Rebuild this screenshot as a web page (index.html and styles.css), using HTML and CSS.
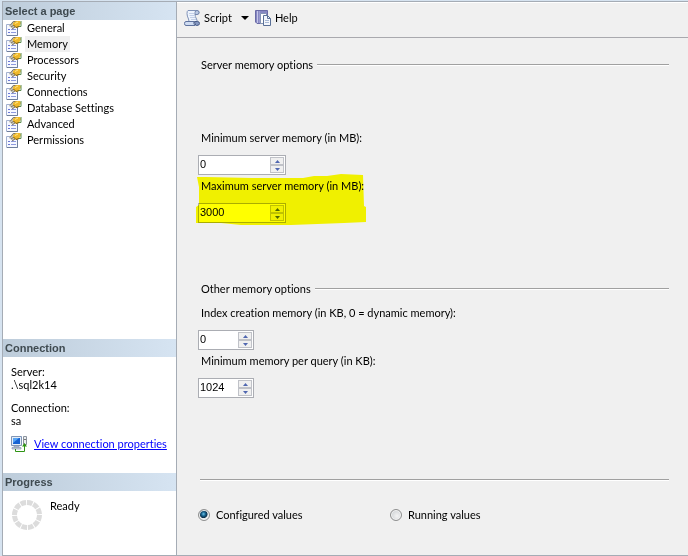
FILE: index.html
```
<!DOCTYPE html>
<html lang="en">
<head>
    <meta charset="UTF-8">
    <meta name="viewport" content="width=device-width, initial-scale=1.0">
    <title>Server Properties</title>
    <link rel="stylesheet" href="styles.css">
</head>
<body>
<!-- shared icons -->
<svg class="defs" aria-hidden="true">
    <symbol id="page-icon" viewBox="0 0 16 16">
        <path d="M.5 4.500h11v11H.5z" fill="#f6f8ff" stroke="#a3b1cf"/>
        <path d="M11.500 6v9.500H1" fill="none" stroke="#6f7f9c"/>
        <path d="M2 9.500h2M2 12.500h2" stroke="#6a78d8"/>
        <path d="M5 9.500h5M5 12.500h5" stroke="#8d99de"/>
        <path d="M3 6l4-5h3v5L7 9z" fill="#c9c5b8"/>
        <path d="M4 5.500L7.500 1.500h3M5 7l3-2M6 9l3-2" fill="none" stroke="#77746a"/>
        <path d="M7 3l3-2h4l1 2-2 4-3 1-3-3z" fill="#efb92c"/>
        <path d="M7.500 5l2.500 2.500 3-1" fill="none" stroke="#7d5e1a"/>
        <path d="M9 3.500l3-1.500" stroke="#ffe68a"/>
        <path d="M13 6.500h2V1" fill="none" stroke="#5c8d50"/>
    </symbol>
    <symbol id="up" viewBox="0 0 5 3"><path d="M0 3h5L2.500 0z"/></symbol>
    <symbol id="down" viewBox="0 0 5 3"><path d="M0 0h5L2.500 3z"/></symbol>
</svg>

<div class="window">
    <aside class="sidebar">
        <h2 class="side-title">Select a page</h2>
        <nav class="pages">
            <a href="#general"><svg><use href="#page-icon"/></svg><span>General</span></a>
            <a href="#memory" class="selected"><svg><use href="#page-icon"/></svg><span>Memory</span></a>
            <a href="#processors"><svg><use href="#page-icon"/></svg><span>Processors</span></a>
            <a href="#security"><svg><use href="#page-icon"/></svg><span>Security</span></a>
            <a href="#connections"><svg><use href="#page-icon"/></svg><span>Connections</span></a>
            <a href="#database"><svg><use href="#page-icon"/></svg><span>Database Settings</span></a>
            <a href="#advanced"><svg><use href="#page-icon"/></svg><span>Advanced</span></a>
            <a href="#permissions"><svg><use href="#page-icon"/></svg><span>Permissions</span></a>
        </nav>

        <h2 class="side-title">Connection</h2>
        <div class="connection">
            <p>Server:<br>.\sql2k14</p>
            <p>Connection:<br>sa</p>
            <div class="view-link">
                <svg class="icon" viewBox="0 0 16 16">
                    <path d="M.5.500h10v9H.5z" fill="#e5edf7" stroke="#8095b5"/>
                    <path d="M2 2h7v6H2z" fill="#1762d2"/>
                    <path d="M2 2h6L2 7z" fill="#58a5f4"/>
                    <path d="M3 10h5v1H3zM1 11.500h9v1.500H1z" fill="#c8d2de" stroke="#8c9ab0" stroke-width=".7"/>
                    <path d="M12.500.5h3v8h-3z" fill="#eceff2" stroke="#8a929c"/>
                    <path d="M13 3.500h2" stroke="#777"/>
                    <path d="M4.500 13v2.500h9V9" fill="none" stroke="#2f9414"/>
                    <path d="M11 10.500h5L13.500 7z" fill="#2f9414"/>
                </svg>
                <a href="#properties">View connection properties</a>
            </div>
        </div>

        <h2 class="side-title">Progress</h2>
        <div class="progress">
            <svg class="spinner" viewBox="0 0 30 30">
                <circle cx="15" cy="15" r="12.500" pathLength="120"/>
            </svg>
            <span>Ready</span>
        </div>
    </aside>

    <main class="content">
        <div class="toolbar">
            <button type="button">
                <svg class="icon" viewBox="0 0 16 16">
                    <path d="M4 .5h9q2 0 2 2t-2 2h-2q0 2 1.500 4.500t1 6H4q2-3 .5-6T3 3.500 4 .5z" fill="#eef4fd" stroke="#7f92b8"/>
                    <path d="M13 .5q-2 0-2 2v2h2q2 0 2-2t-2-2z" fill="#bccbe6" stroke="#7487ac"/>
                    <path d="M5 3.500h5M5.500 5.500h5M6 7.500h5M7 9.500h5" stroke="#c3d0e8"/>
                    <path d="M2 11.500h8q-1 2 1 4H2Q.5 15.500 .5 13.500t1.500-2z" fill="#cfdcf2" stroke="#5f739e"/>
                    <path d="M10.500 11.500h3q2 0 2 2t-3 2q-2-1-2-4z" fill="#8598c1" stroke="#4a5d88"/>
                </svg>
                <span>Script</span>
            </button>
            <button type="button" class="drop" aria-label="Script options">
                <svg viewBox="0 0 8 4"><path d="M0 0h8L4 4z"/></svg>
            </button>
            <button type="button">
                <svg class="icon" viewBox="0 0 16 16">
                    <path d="M.5.500h12v13H2L.5 12z" fill="#8788c2" stroke="#6a6ba6"/>
                    <path d="M2.500 1v12" stroke="#c5c6e8"/>
                    <path d="M4.500 1v12" stroke="#9b9ccf"/>
                    <path d="M5.500 3.500h5l2 2v8h-7z" fill="#fff" stroke="#8494b4"/>
                    <path d="M8.500 5.500h4l3 3v7h-7z" fill="#f4f7fc" stroke="#5a7097"/>
                    <path d="M12.500 5.500v3h3" fill="none" stroke="#5a7097"/>
                    <path d="M10 10.500h4M10 12.500h4" stroke="#a9b9d4"/>
                </svg>
                <span>Help</span>
            </button>
        </div>

        <form class="options">
            <h3 class="group-title">Server memory options</h3>
            <div class="server-fields">
                <div class="field">
                    <label for="min-server">Minimum server memory (in MB):</label>
                    <div class="spin wide">
                        <input id="min-server" type="text" inputmode="numeric" value="0">
                        <div class="arrows">
                            <button type="button" aria-label="Increase"><svg><use href="#up"/></svg></button>
                            <button type="button" aria-label="Decrease"><svg><use href="#down"/></svg></button>
                        </div>
                    </div>
                </div>
                <div class="field marked">
                    <label for="max-server">Maximum server memory (in MB):</label>
                    <div class="spin wide">
                        <input id="max-server" type="text" inputmode="numeric" value="3000">
                        <div class="arrows">
                            <button type="button" aria-label="Increase"><svg><use href="#up"/></svg></button>
                            <button type="button" aria-label="Decrease"><svg><use href="#down"/></svg></button>
                        </div>
                    </div>
                    <svg class="marker" viewBox="0 0 170 52" aria-hidden="true">
                        <path d="M1 4h9l46 1h51l11-2 13 0 14-2 22 1 1 31 2 1v15l-22 1-53 2H45l-20-2-25 0V34l3-2V14z" fill="#ff0"/>
                    </svg>
                </div>
            </div>

            <h3 class="group-title">Other memory options</h3>
            <div class="other-fields">
                <div class="field">
                    <label for="index-memory">Index creation memory (in KB, 0 = dynamic memory):</label>
                    <div class="spin">
                        <input id="index-memory" type="text" inputmode="numeric" value="0">
                        <div class="arrows">
                            <button type="button" aria-label="Increase"><svg><use href="#up"/></svg></button>
                            <button type="button" aria-label="Decrease"><svg><use href="#down"/></svg></button>
                        </div>
                    </div>
                </div>
                <div class="field">
                    <label for="query-memory">Minimum memory per query (in KB):</label>
                    <div class="spin">
                        <input id="query-memory" type="text" inputmode="numeric" value="1024">
                        <div class="arrows">
                            <button type="button" aria-label="Increase"><svg><use href="#up"/></svg></button>
                            <button type="button" aria-label="Decrease"><svg><use href="#down"/></svg></button>
                        </div>
                    </div>
                </div>
            </div>

            <hr>
            <div class="values">
                <label><input type="radio" name="values" checked>Configured values</label>
                <label><input type="radio" name="values">Running values</label>
            </div>
        </form>
    </main>
</div>
</body>
</html>
```
FILE: styles.css
```
* {
    box-sizing: border-box;
}
body {
    margin: 0;
    background-color: #d6e3f0;
    font-family: Lato, "Liberation Sans", sans-serif;
    font-size: 11px;
    font-variant-ligatures: none;
    line-height: 16px;
    color: #000;
}
h2, h3, p {
    margin: 0;
}
button {
    font: inherit;
    color: inherit;
    border: 0;
    padding: 0;
    background: none;
}
.defs {
    position: absolute;
    width: 0;
    height: 0;
}
.icon {
    width: 16px;
    height: 16px;
    flex: none;
}
.window {
    display: flex;
    min-height: 100vh;
    padding: 1px 0 0 2px;
}

/* left side */
.sidebar {
    display: flex;
    flex-direction: column;
    width: 175px;
    flex: none;
    background-color: #fff;
    border: 1px solid #a5acb5;
}
.side-title {
    height: 18px;
    padding-left: 2px;
    background: linear-gradient(to right, #bdccda, #d6e4f2);
    font-family: "Liberation Sans", Arial, sans-serif;
    font-size: 11px;
    line-height: 18px;
    color: #3f4a50;
}
.pages {
    flex: 1;
    padding-left: 3px;
}
.pages a {
    display: flex;
    align-items: center;
    gap: 3px;
    height: 16px;
    color: #000;
    text-decoration: none;
}
.pages svg {
    width: 16px;
    height: 16px;
}
.pages span {
    padding: 0 2px;
}
.pages .selected span {
    background-color: #f0f0f0;
}
.connection {
    height: 116px;
    padding: 8px 8px 0;
    line-height: 13px;
}
.connection p {
    margin-bottom: 10px;
}
.view-link {
    display: flex;
    align-items: center;
    gap: 7px;
    height: 13px;
    white-space: nowrap;
}
.view-link a {
    color: #00f;
}
.progress {
    display: flex;
    gap: 8px;
    height: 64px;
    padding: 7px 9px;
}
.spinner {
    width: 30px;
    height: 30px;
    margin-top: 2px;
}
.spinner circle {
    fill: none;
    stroke: #dcdcdc;
    stroke-width: 5;
    stroke-dasharray: 8.5 1.5;
}

/* right side */
.content {
    flex: 1;
    background-color: #f0f0f0;
    border-top: 1px solid #a5acb5;
    border-bottom: 1px solid #a5acb5;
}
.toolbar {
    display: flex;
    align-items: center;
    height: 36px;
    padding: 0 7px 4px;
    border-top: 1px solid #fff;
    border-bottom: 1px solid #a9a9ae;
}
.toolbar button {
    display: flex;
    align-items: center;
    gap: 4px;
}
.toolbar .drop {
    padding: 0 6px 0 9px;
}
.drop svg {
    width: 8px;
    height: 4px;
}
.options {
    padding: 19px 19px 0 21px;
}
.group-title {
    display: flex;
    align-items: center;
    gap: 4px;
    padding-left: 3px;
    font-size: 11px;
    font-weight: normal;
}
.group-title::after {
    content: "";
    flex: 1;
    border-top: 1px solid #a0a0a0;
    border-bottom: 1px solid #fff;
}
.server-fields {
    padding: 57px 0 55px;
}
.other-fields {
    padding: 8px 0 78px;
}
.field {
    height: 48px;
}
.field label {
    display: block;
    margin-bottom: 9px;
    padding-left: 3px;
}
.spin {
    display: flex;
    width: 56px;
    height: 20px;
    border: 1px solid #abadb3;
    background-color: #fff;
}
.spin.wide {
    width: 88px;
}
.spin input {
    flex: 1;
    min-width: 0;
    border: 0;
    padding: 0 1px 2px;
    background: none;
    font: 11px "Liberation Sans", Arial, sans-serif;
    outline: none;
}
.arrows {
    display: flex;
    flex-direction: column;
    width: 15px;
    padding: 1px 1px 1px 0;
}
.arrows button {
    display: flex;
    flex: 1;
    align-items: center;
    justify-content: center;
    border: 1px solid #c0c2c8;
    background-color: #f0f0f0;
}
.arrows svg {
    width: 5px;
    height: 3px;
    fill: #5067b0;
}
.marked {
    position: relative;
}
/* yellow highlighter over the field */
.marker {
    position: absolute;
    top: -5px;
    left: -2px;
    width: 170px;
    height: 52px;
    mix-blend-mode: multiply;
    pointer-events: none;
}
hr {
    height: 2px;
    margin: 0 0 26px 2px;
    border: 0;
    border-top: 1px solid #a0a0a0;
    border-bottom: 1px solid #fff;
}
.values {
    display: flex;
}
.values label {
    display: flex;
    align-items: center;
    gap: 6px;
    width: 192px;
}
.values input {
    appearance: none;
    width: 12px;
    height: 12px;
    margin: 0;
    border: 1px solid #8e8f8f;
    border-radius: 50%;
    background: radial-gradient(circle at 60% 60%, #f4f4f4, #c4c8cc);
    box-shadow: inset 0 0 0 1px #f4f4f4;
}
.values input:checked {
    background: radial-gradient(circle at 45% 40%, #6cc4e8, #15608c 25%, #0c2f48 45%, #e4e8ea 55%);
}
```
